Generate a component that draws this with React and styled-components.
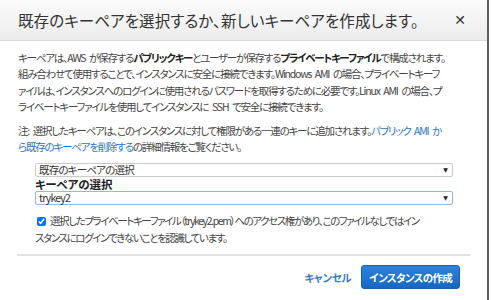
import React from "react";
import styled, { createGlobalStyle } from "styled-components";

const GlobalStyle = createGlobalStyle`
  body {
    margin: 0;
    background: #ffffff;
    font-family: "Noto Sans CJK JP", "Liberation Sans", sans-serif;
    font-feature-settings: "palt";
  }
`;

const Dialog = styled.div`
  width: 489px;
  height: 300px;
  box-sizing: border-box;
  border-right: 2px solid #5c5c5c;
  background: #fff;
  display: flex;
  flex-direction: column;
  overflow: hidden;
`;

const Header = styled.div`
  height: 41px;
  flex: none;
  box-sizing: border-box;
  display: flex;
  align-items: center;
  justify-content: space-between;
  padding: 0 21px 0 18px;
  background: linear-gradient(#fbfbfb, #ececec);
  border-bottom: 1px solid #d9d9d9;

  h2 {
    margin: 0;
    font-size: 15.5px;
    font-weight: normal;
    color: #333;
    letter-spacing: 0.1px;
    white-space: nowrap;
  }
`;

const Close = styled.span`
  font-family: "DejaVu Sans", sans-serif;
  font-size: 14px;
  font-weight: bold;
  color: #333;
`;

const Body = styled.div`
  padding: 9px 0 0 18px;
  font-size: 10.5px;
  line-height: 16.3px;
  color: #444;
  letter-spacing: -1.2px;
  word-spacing: 2.5px;
  white-space: nowrap;

  p {
    margin: 0 0 8px;
  }

  b {
    color: #222;
  }

  a {
    color: #2a74c6;
    text-decoration: none;
  }
`;

const Fields = styled.div`
  padding: 0 34px 0 35px;
  margin-top: -1px;
`;

const Select = styled.div`
  height: 14px;
  box-sizing: border-box;
  border: 1px solid ${(p) => (p.$active ? "#94b8e6" : "#cacaca")};
  border-radius: 2px;
  display: flex;
  align-items: center;
  justify-content: space-between;
  padding: 0 5px 0 3px;
  font-size: 10.5px;
  line-height: 12px;
  color: #333;
  letter-spacing: -0.8px;

  &::after {
    content: "▼";
    font-family: "DejaVu Sans", sans-serif;
    font-size: 6px;
    color: #222;
  }
`;

const Label = styled.div`
  font-weight: bold;
  font-size: 11.5px;
  line-height: 14px;
  color: #222;
  letter-spacing: -0.1px;
`;

const Check = styled.div`
  margin-top: 7px;
  font-size: 10.5px;
  line-height: 17px;
  color: #444;
  letter-spacing: -1.4px;
  white-space: nowrap;

  input {
    margin: 0 4px 0 2px;
    width: 9px;
    height: 9px;
    vertical-align: -1px;
  }
`;

const Footer = styled.div`
  flex: none;
  margin: auto 17px 0 17px;
  border-top: 2px solid #e2e2e2;
  height: 42px;
  display: flex;
  align-items: center;
  justify-content: flex-end;
  gap: 10px;
  padding: 0 10px 2px 0;
`;

const Cancel = styled.a`
  font-size: 10.5px;
  font-weight: bold;
  color: #3578c6;
  text-decoration: none;
  letter-spacing: -0.3px;
`;

const Primary = styled.button`
  height: 24px;
  padding: 0 7px;
  border: 1px solid #1a5fb0;
  border-radius: 3px;
  background: linear-gradient(#2e83d8, #1767c2);
  color: #fff;
  font-family: inherit;
  font-feature-settings: "palt";
  font-size: 10.5px;
  font-weight: bold;
  letter-spacing: -0.7px;
`;

export default function App() {
  return (
    <>
      <GlobalStyle />
      <Dialog>
        <Header>
          <h2>既存のキーペアを選択するか、新しいキーペアを作成します。</h2>
          <Close>✕</Close>
        </Header>
        <Body>
          <p>
            キーペアは、AWS が保存する<b>パブリックキー</b>とユーザーが保存する<b>プライベートキーファイル</b>で構成されます。
            <br />
            組み合わせて使用することで、インスタンスに安全に接続できます。Windows AMI の場合、プライベートキーフ
            <br />
            ァイルは、インスタンスへのログインに使用されるパスワードを取得するために必要です。Linux AMI の場合、プ
            <br />
            ライベートキーファイルを使用してインスタンスに SSH で安全に接続できます。
          </p>
          <p>
            注: 選択したキーペアは、このインスタンスに対して権限がある一連のキーに追加されます。<a href="#">パブリック AMI か
            <br />
            ら既存のキーペアを削除する</a>の詳細情報をご覧ください。
          </p>
        </Body>
        <Fields>
          <Select>既存のキーペアの選択</Select>
          <Label>キーペアの選択</Label>
          <Select $active>trykey2</Select>
          <Check>
            <input type="checkbox" defaultChecked />
            選択したプライベートキーファイル（trykey2.pem）へのアクセス権があり、このファイルなしではイン
            <br />
            スタンスにログインできないことを認識しています。
          </Check>
        </Fields>
        <Footer>
          <Cancel href="#">キャンセル</Cancel>
          <Primary>インスタンスの作成</Primary>
        </Footer>
      </Dialog>
    </>
  );
}
